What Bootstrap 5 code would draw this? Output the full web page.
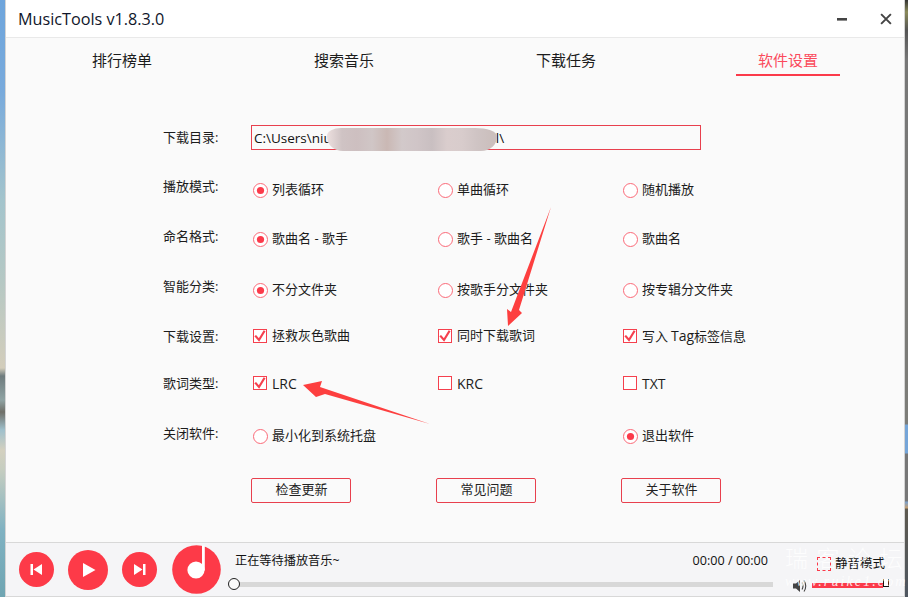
<!DOCTYPE html>
<html lang="zh-CN">
<head>
<meta charset="utf-8">
<title>MusicTools</title>
<link href="https://cdn.jsdelivr.net/npm/bootstrap@5.3.0/dist/css/bootstrap.min.css" rel="stylesheet">
<style>
html,body{height:597px;overflow:hidden;margin:0}
body{position:relative;font-family:"Open Sans","Noto Sans CJK SC",sans-serif;font-size:13px;color:#1c1c1c;background:#888}
.strip-l{width:5px;flex:none;background:linear-gradient(180deg,#6ea5dc 0,#78aadc 90px,#a3c4cc 200px,#b5c8c4 280px,#d3cdbb 368px,#6f7c7e 376px,#8fa3a3 400px,#6f6f68 412px,#9fc0cc 430px,#d3d0bf 450px,#c5cdc0 470px,#80b2c2 530px,#6fa5b2 597px)}
.strip-r{width:3px;flex:none;background:linear-gradient(180deg,#333 0,#8a8a5a 12px,#555 30px,#777 60px,#7d7d78 424px,#75a5d8 425px,#75a5d8 453px,#777 454px,#777 501px,#7aa0cc 502px,#c8a070 508px,#5e5a50 509px,#4e5660 597px)}
.app-win{flex:1;min-width:0;border:1px solid #d4d4d4;border-width:0 1px;background:#fafafa;display:flex;flex-direction:column}
.title-bar{height:38px;background:#fff;border-bottom:1px solid #e9e9e9;padding-left:12px;padding-right:12px;flex:none}
.title-txt{font-size:16.2px;color:#10162a;line-height:36px}
.win-btn{background:none;border:0;padding:0;line-height:0}
.win-gap{margin-left:32px}
.tab-row{height:38px;padding-left:5px;flex:none}
.tab-cell{width:222px;text-align:center}
.tab-lnk{display:inline-block;width:104px;height:38px;padding-top:12px;line-height:20px;font-size:15px;color:#1c1c1c;text-decoration:none}
.tab-lnk.on{color:#fb4a5c;border-bottom:2px solid #fb3a4a}
.set-grid{display:grid;grid-template-columns:88px 185px 185px 185px;grid-template-rows:50px 54px 44px 58px 34px 60px 46px 62px;align-items:center;margin-top:37px;padding-left:157px}
.lab-up3{margin-bottom:6px}.lab-up2{margin-bottom:4px}.lab-dn1{margin-top:2px}
.path-box{grid-column:2/span 3;width:450px;height:25px;margin-bottom:1px;border:1px solid #e8404e;padding:0 2px;line-height:24px;font-size:13.5px;white-space:nowrap;color:#111;overflow:hidden}
.path-mid{margin-left:67px;margin-right:78px}
.mosaic{position:absolute;left:327px;top:128px;width:170px;height:23px;border-radius:14px 22px 16px 16px/8px 8px 14px 14px;background:linear-gradient(90deg,#ecdfde 0,#cfc3c4 15px,#cdbfc0 30px,#d0c6c6 45px,#cab8b4 60px,#d2c9ca 75px,#d0c5c7 90px,#c9bfc1 105px,#dacdcd 120px,#d8cccc 135px,#cfc4c4 150px,#cbbfbd 165px)}
.opt{display:flex;align-items:center;margin:0;padding-left:2px}
.opt .form-check-input{margin:0 4px 0 0;flex:none;float:none;width:15px;height:15px;background-color:#fff;border:1.5px solid #fb6a78;box-shadow:none}
.opt .form-check-input[type=checkbox]{width:14px;height:14px;border-radius:0;border:1.5px solid #f5404e;margin-right:5px}
.opt .form-check-input[type=radio]:checked{background-image:url("data:image/svg+xml,%3Csvg xmlns='http://www.w3.org/2000/svg' viewBox='0 0 15 15'%3E%3Ccircle cx='7.5' cy='7.5' r='3.6' fill='%23fb3a4a'/%3E%3C/svg%3E");background-size:15px 15px;background-color:#fff;border-color:#fb6a78}
.opt .form-check-input[type=checkbox]:checked{background-image:url("data:image/svg+xml,%3Csvg xmlns='http://www.w3.org/2000/svg' viewBox='0 0 14 14'%3E%3Cpath d='M2.2 6.6 6 11 11.6 1.8' fill='none' stroke='%23f5404e' stroke-width='2.2'/%3E%3C/svg%3E");background-size:14px 14px;background-color:#fff;border-color:#f5404e}
.lat{font-size:14px;padding-top:2px;line-height:16px}
.lat-in{font-size:14px;margin:0 0 0 3px}
.act-btn{width:100px;height:25px;padding:0 0 2px 1px;border:1px solid #e8404e;border-radius:2px;background:#fafafa;font-size:13px;color:#222;line-height:20px}
.foot-bar{height:55px;margin-top:auto;border-top:1px solid #d8d8d8;border-bottom:1px solid #d8d8d8;background:#f5f5f7;padding-left:13px;flex:none}
.round-red{border:0;padding:0;background:#fd3a48;border-radius:50%;line-height:0;display:flex;align-items:center;justify-content:center;flex:none}
.rd-35{width:35px;height:35px}.rd-40{width:40px;height:40px;margin:0 14px}
.disc{margin-left:15px;margin-right:8px;flex:none;display:block}
.mid-col{width:544px;flex:none;padding-top:6px}
.now-line{padding:0 5px 0 6px;line-height:20px;font-size:12.2px;height:20px;color:#111}
.time-txt{font-size:12.6px}
.seek{height:18px;margin-top:6px;position:relative}
.seek-track{height:5px;background:#d8d8d8;margin-left:5px;position:relative;top:5px}
.seek-knob{position:absolute;left:-1px;top:1.5px;width:12px;height:12px;border-radius:50%;background:#fafafa;border:1.5px solid #222}
.right-col{flex:1;position:relative}
.mute-line{padding-left:44px;height:20px;margin-top:9px}
.mute-box{width:14px;height:14px;border:1.5px dashed #fb3a4a;margin-right:4px;flex:none;position:relative;z-index:2}
.mute-txt{font-size:12.5px;color:#111;line-height:20px}
.vol-line{padding-left:20px;margin-top:3px;height:18px}
.vol-bar{width:71px;height:5px;background:#fb3a4a;margin-left:5px}
.vol-knob{width:6px;height:8px;background:#fff;border:1.5px solid #111;border-width:0 1.5px 1.5px 1.5px;margin-top:-5px}
.note-layer{position:absolute;left:0;top:0;width:908px;height:597px;pointer-events:none}
.mark-big{position:absolute;left:785px;top:542px;font-size:23px;line-height:30px;color:#fff;opacity:.85;font-family:"Noto Sans CJK SC",sans-serif;font-weight:300;letter-spacing:8.5px;white-space:nowrap}
.mark-big span{letter-spacing:0}
.mark-url{position:absolute;left:785px;top:573px;font-size:14px;line-height:18px;color:#fff;opacity:.85;font-family:"Liberation Serif",serif;letter-spacing:2.1px;font-style:italic;white-space:nowrap}
.mark-url span{letter-spacing:0}
</style>
</head>
<body class="d-flex">
<div class="strip-l"></div>
<div class="app-win">
  <div class="title-bar d-flex align-items-center justify-content-between">
    <span class="title-txt">MusicTools v1.8.3.0</span>
    <div class="d-flex align-items-center">
      <button class="win-btn" aria-label="minimize"><svg width="12" height="12" viewBox="0 0 12 12"><rect x="1" y="5" width="10" height="2.6" fill="#444"/></svg></button>
      <button class="win-btn win-gap" aria-label="close"><svg width="12" height="12" viewBox="0 0 13 13"><path d="M1.2 1.2 11.8 11.8M11.8 1.2 1.2 11.8" stroke="#444" stroke-width="2.1" fill="none"/></svg></button>
    </div>
  </div>
  <nav class="tab-row d-flex">
    <div class="tab-cell"><a class="tab-lnk" href="#">排行榜单</a></div>
    <div class="tab-cell"><a class="tab-lnk" href="#">搜索音乐</a></div>
    <div class="tab-cell"><a class="tab-lnk" href="#">下载任务</a></div>
    <div class="tab-cell"><a class="tab-lnk on" href="#">软件设置</a></div>
  </nav>
  <div class="set-grid">
    <span>下载目录:</span>
    <div class="path-box">C:\Users\niu<span class="path-mid">i M</span>l\</div>

    <span class="lab-up3">播放模式:</span>
    <label class="opt"><input class="form-check-input" type="radio" name="a" checked>列表循环</label>
    <label class="opt"><input class="form-check-input" type="radio" name="a">单曲循环</label>
    <label class="opt"><input class="form-check-input" type="radio" name="a">随机播放</label>

    <span class="lab-up2">命名格式:</span>
    <label class="opt"><input class="form-check-input" type="radio" name="b" checked>歌曲名 - 歌手</label>
    <label class="opt"><input class="form-check-input" type="radio" name="b">歌手 - 歌曲名</label>
    <label class="opt"><input class="form-check-input" type="radio" name="b">歌曲名</label>

    <span class="lab-up3">智能分类:</span>
    <label class="opt"><input class="form-check-input" type="radio" name="c" checked>不分文件夹</label>
    <label class="opt"><input class="form-check-input" type="radio" name="c">按歌手分文件夹</label>
    <label class="opt"><input class="form-check-input" type="radio" name="c">按专辑分文件夹</label>

    <span class="lab-dn1">下载设置:</span>
    <label class="opt"><input class="form-check-input" type="checkbox" checked>拯救灰色歌曲</label>
    <label class="opt"><input class="form-check-input" type="checkbox" checked>同时下载歌词</label>
    <label class="opt"><input class="form-check-input" type="checkbox" checked><span>写入<span class="lat-in">Tag</span>标签信息</span></label>

    <span class="lab-dn1">歌词类型:</span>
    <label class="opt"><input class="form-check-input" type="checkbox" checked><span class="lat">LRC</span></label>
    <label class="opt"><input class="form-check-input" type="checkbox"><span class="lat">KRC</span></label>
    <label class="opt"><input class="form-check-input" type="checkbox"><span class="lat">TXT</span></label>

    <span class="lab-up2">关闭软件:</span>
    <label class="opt"><input class="form-check-input" type="radio" name="d">最小化到系统托盘</label>
    <span></span>
    <label class="opt"><input class="form-check-input" type="radio" name="d" checked>退出软件</label>

    <span></span>
    <div><button class="act-btn">检查更新</button></div>
    <div><button class="act-btn">常见问题</button></div>
    <div><button class="act-btn">关于软件</button></div>
  </div>
  <div class="foot-bar d-flex align-items-center">
    <button class="round-red rd-35" aria-label="previous"><svg width="13" height="13" viewBox="0 0 13 13"><rect x="0.5" y="1" width="2.5" height="11" fill="#fff"/><path d="M12 1v11L3.500 6.500z" fill="#fff"/></svg></button>
    <button class="round-red rd-40" aria-label="play"><svg width="16" height="16" viewBox="0 0 16 16"><path d="M3 1v14l12.500-7z" fill="#fff"/></svg></button>
    <button class="round-red rd-35" aria-label="next"><svg width="13" height="13" viewBox="0 0 13 13"><path d="M1 1v11l8.500-5.500z" fill="#fff"/><rect x="10" y="1" width="2.500" height="11" fill="#fff"/></svg></button>
    <svg class="disc" width="49" height="49" viewBox="0 0 49 49"><circle cx="24.500" cy="24.500" r="24.300" fill="#fd3a48"/><circle cx="24" cy="25" r="8.600" fill="#fff"/><rect x="30" y="0.500" width="2.800" height="25" fill="#fff"/></svg>
    <div class="mid-col">
      <div class="now-line d-flex justify-content-between"><span>正在等待播放音乐~</span><span class="time-txt">00:00 / 00:00</span></div>
      <div class="seek"><div class="seek-track"></div><div class="seek-knob"></div></div>
    </div>
    <div class="right-col">
      <div class="mute-line d-flex align-items-center"><span class="mute-box"></span><span class="mute-txt">静音模式</span></div>
      <div class="vol-line d-flex align-items-center">
        <svg width="14" height="14" viewBox="0 0 14 14"><path d="M0 4.500h3L7 1v12L3 9.500H0z" fill="#444"/><path d="M9 3.500q2 3.500 0 7M11 1.500q3.500 5.500 0 11" stroke="#444" stroke-width="1.100" fill="none"/></svg>
        <div class="vol-bar"></div><div class="vol-knob"></div>
      </div>
    </div>
  </div>
</div>
<div class="strip-r"></div>
<div class="mosaic"></div>
<svg class="note-layer" viewBox="0 0 908 597" aria-hidden="true"><polygon points="551,207 519,310 522,313 508,326 507,309 511,312" fill="#fd3f3f"/><polygon points="303,385 322,381 320,387 430,424 325,394 316,397" fill="#fd3f3f"/></svg>
<div class="mark-big">瑞客论<span>坛</span></div>
<div class="mark-url">www.ruike1.co<span>m</span></div>
<script src="https://cdn.jsdelivr.net/npm/bootstrap@5.3.0/dist/js/bootstrap.bundle.min.js"></script>
</body>
</html>
